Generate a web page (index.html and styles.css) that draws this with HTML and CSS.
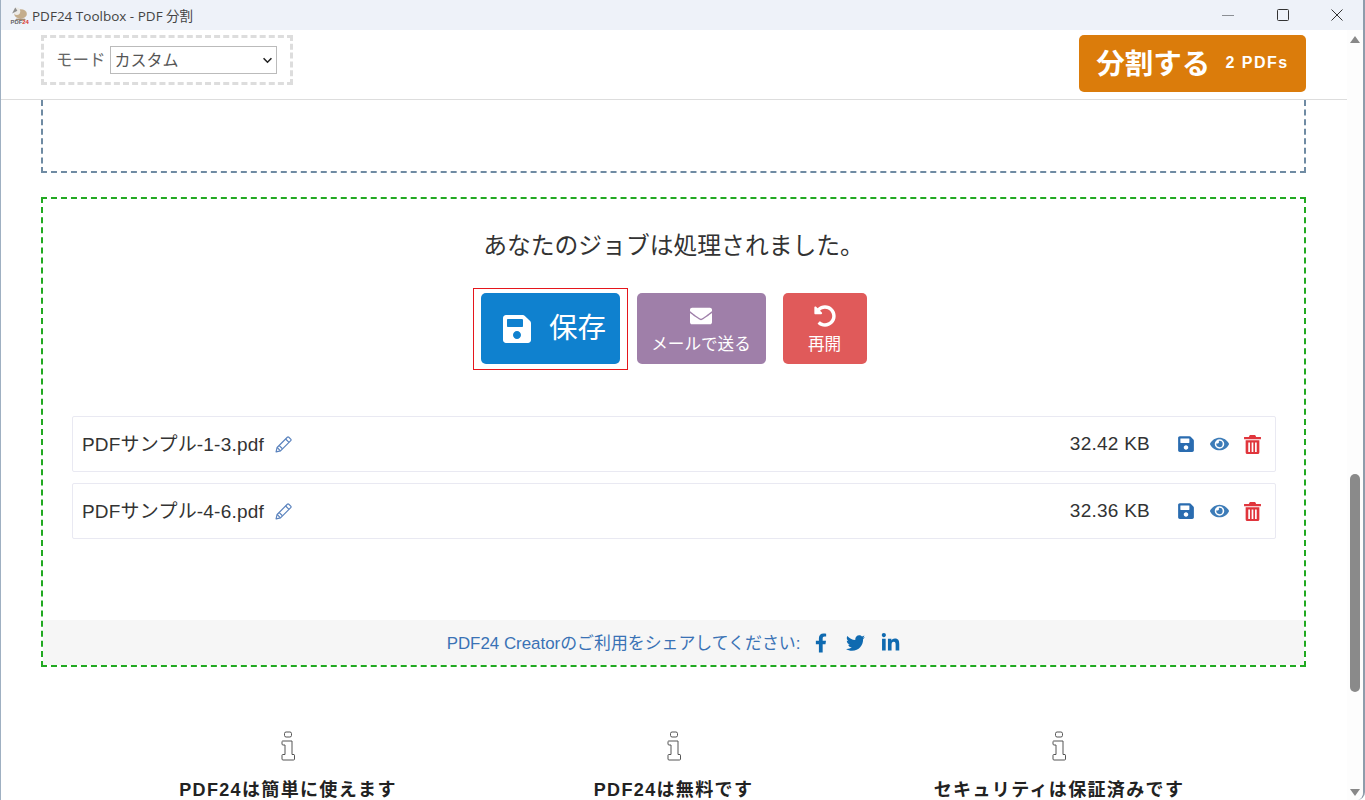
FILE: index.html
```html
<!DOCTYPE html>
<html lang="ja">
<head>
  <meta charset="UTF-8" />
  <title>PDF24 Toolbox - PDF 分割</title>
  <link rel="stylesheet" href="styles.css">
</head>
<body>

<div class="window">
  <div class="titlebar">
    <svg class="app-logo" viewBox="0 0 18 18" aria-hidden="true">
      <ellipse cx="10" cy="7.5" rx="6" ry="4.5" fill="#c4ad8c"/>
      <ellipse cx="6.5" cy="5" rx="3.2" ry="3.6" fill="#eceae6"/>
      <path d="M2 7l3-5.5 2 3z" fill="#8d8d8d"/>
      <path d="M6 12h8l1 1H5z" fill="#8a6a45"/>
      <text x="0.5" y="17.5" class="logo-text">PDF<tspan fill="#d8342c">24</tspan></text>
    </svg>
    <span class="app-title">PDF24 Toolbox - PDF 分割</span>
    <div class="win-buttons">
      <svg viewBox="0 0 12 12"><path d="M0 6.5h12" stroke="#8b8f94" stroke-width="1"/></svg>
      <svg viewBox="0 0 12 12"><rect x=".5" y=".5" width="11" height="11" rx="1" fill="none" stroke="#333" stroke-width="1"/></svg>
      <svg viewBox="0 0 12 12"><path d="M.5.5l11 11M11.5.5l-11 11" stroke="#333" stroke-width="1"/></svg>
    </div>
  </div>

  <div class="frame">
    <div class="content">
      <div class="toolbar">
        <div class="mode-box">
          <label class="mode-label">モード</label>
          <div class="select-wrap">
            <select class="mode-select"><option>カスタム</option></select>
            <svg class="select-arrow" viewBox="0 0 12 8"><path d="M1.5 1.5L6 6l4.5-4.5" fill="none" stroke="#222" stroke-width="1.8"/></svg>
          </div>
        </div>
        <button class="split-btn">分割する <small>2 PDFs</small></button>
      </div>

      <div class="page">
        <div class="pages-box"></div>

        <div class="result-box">
          <h2 class="result-title">あなたのジョブは処理されました。</h2>

          <div class="actions">
            <div class="save-wrap">
              <button class="btn-save">
                <svg viewBox="0 0 448 512"><use href="#i-save"/></svg>
                <span>保存</span>
              </button>
            </div>
            <button class="btn-small btn-mail">
              <svg viewBox="0 0 512 512"><path d="M502.3 190.8c3.9-3.1 9.7-.2 9.7 4.7V400c0 26.5-21.5 48-48 48H48c-26.5 0-48-21.5-48-48V195.6c0-5 5.7-7.8 9.7-4.7 22.4 17.4 52.1 39.5 154.1 113.6 21.1 15.4 56.7 47.8 92.2 47.6 35.7.3 72-32.8 92.3-47.6 102-74.1 131.6-96.3 154-113.7zM256 320c23.2.4 56.6-29.2 73.4-41.4 132.7-96.3 142.8-104.7 173.4-128.7 5.8-4.5 9.2-11.5 9.2-18.9v-19c0-26.5-21.5-48-48-48H48C21.5 64 0 85.5 0 112v19c0 7.4 3.4 14.3 9.2 18.9 30.6 23.9 40.7 32.4 173.4 128.7 16.8 12.2 50.2 41.8 73.4 41.4z"/></svg>
              <span>メールで送る</span>
            </button>
            <button class="btn-small btn-redo">
              <svg viewBox="0 0 512 512"><path d="M255.545 8c-66.269.119-126.438 26.233-170.86 68.685L48.971 40.971C33.851 25.851 8 36.559 8 57.941V192c0 13.255 10.745 24 24 24h134.059c21.382 0 32.09-25.851 16.971-40.971l-41.75-41.75c30.864-28.899 70.801-44.907 113.23-45.273 92.398-.798 170.283 73.977 169.484 169.442C423.236 348.009 349.816 424 256 424c-41.127 0-79.997-14.678-110.63-41.556-4.743-4.161-11.906-3.908-16.368.553L89.34 422.659c-4.872 4.872-4.631 12.815.482 17.433C133.798 479.813 192.074 504 256 504c136.966 0 247.999-111.033 248-247.998C504.001 119.193 392.354 7.755 255.545 8z"/></svg>
              <span>再開</span>
            </button>
          </div>

          <div class="files">
            <div class="file-row">
              <span class="file-name">PDFサンプル-1-3.pdf</span>
              <svg class="icon-pencil" viewBox="0 0 16 16"><use href="#i-pencil"/></svg>
              <span class="file-size">32.42 KB</span>
              <svg class="icon-save" viewBox="0 0 448 512"><use href="#i-save"/></svg>
              <svg class="icon-eye" viewBox="0 0 576 512"><use href="#i-eye"/></svg>
              <svg class="icon-trash" viewBox="0 0 16 18"><use href="#i-trash"/></svg>
            </div>
            <div class="file-row">
              <span class="file-name">PDFサンプル-4-6.pdf</span>
              <svg class="icon-pencil" viewBox="0 0 16 16"><use href="#i-pencil"/></svg>
              <span class="file-size">32.36 KB</span>
              <svg class="icon-save" viewBox="0 0 448 512"><use href="#i-save"/></svg>
              <svg class="icon-eye" viewBox="0 0 576 512"><use href="#i-eye"/></svg>
              <svg class="icon-trash" viewBox="0 0 16 18"><use href="#i-trash"/></svg>
            </div>
          </div>

          <div class="share">
            <span>PDF24 Creatorのご利用をシェアしてください:</span>
            <svg class="share-fb" viewBox="0 0 320 512"><path d="M279.14 288l14.22-92.66h-88.91v-60.13c0-25.35 12.42-50.06 52.24-50.06h40.42V6.26S260.43 0 225.36 0c-73.22 0-121.08 44.38-121.08 124.72v70.62H22.89V288h81.39v224h100.17V288z"/></svg>
            <svg class="share-tw" viewBox="0 0 512 512"><path d="M459.37 151.716c.325 4.548.325 9.097.325 13.645 0 138.72-105.583 298.558-298.558 298.558-59.452 0-114.68-17.219-161.137-47.106 8.447.974 16.568 1.299 25.34 1.299 49.055 0 94.213-16.568 130.274-44.832-46.132-.975-84.792-31.188-98.112-72.772 6.498.974 12.995 1.624 19.818 1.624 9.421 0 18.843-1.3 27.614-3.573-48.081-9.747-84.143-51.98-84.143-102.985v-1.299c13.969 7.797 30.214 12.67 47.431 13.319-28.264-18.843-46.781-51.005-46.781-87.391 0-19.492 5.197-37.36 14.294-52.954 51.655 63.675 129.3 105.258 216.365 109.807-1.624-7.797-2.599-15.918-2.599-24.04 0-57.828 46.782-104.934 104.934-104.934 30.213 0 57.502 12.67 76.67 33.137 23.715-4.548 46.456-13.32 66.599-25.34-7.798 24.366-24.366 44.833-46.132 57.827 21.117-2.273 41.584-8.122 60.426-16.243-14.292 20.791-32.161 39.308-52.628 54.253z"/></svg>
            <svg class="share-in" viewBox="0 0 448 512"><path d="M100.28 448H7.4V148.9h92.88zM53.79 108.1C24.09 108.1 0 83.5 0 53.8a53.79 53.79 0 0 1 107.58 0c0 29.7-24.1 54.3-53.79 54.3zM447.9 448h-92.68V302.4c0-34.7-.7-79.2-48.29-79.2-48.29 0-55.69 37.7-55.69 76.7V448h-92.78V148.9h89.08v40.8h1.3c12.4-23.5 42.69-48.3 87.88-48.3 94 0 111.28 61.9 111.28 142.3V448z"/></svg>
          </div>
        </div>

        <div class="features">
          <div class="feature">
            <svg viewBox="0 0 14 30"><use href="#i-info"/></svg>
            <h3>PDF24は簡単に使えます</h3>
          </div>
          <div class="feature">
            <svg viewBox="0 0 14 30"><use href="#i-info"/></svg>
            <h3>PDF24は無料です</h3>
          </div>
          <div class="feature">
            <svg viewBox="0 0 14 30"><use href="#i-info"/></svg>
            <h3>セキュリティは保証済みです</h3>
          </div>
        </div>
      </div>
    </div>

    <div class="scrollbar">
      <span class="arrow-up"></span>
      <div class="track"><div class="thumb"></div></div>
      <span class="arrow-down"></span>
    </div>
  </div>
</div>

<svg class="defs" aria-hidden="true">
  <defs>
    <path id="i-save" d="M433.941 129.941l-83.882-83.882A48 48 0 0 0 316.118 32H48C21.49 32 0 53.49 0 80v352c0 26.51 21.49 48 48 48h352c26.51 0 48-21.49 48-48V163.882a48 48 0 0 0-14.059-33.941zM224 416c-35.346 0-64-28.654-64-64 0-35.346 28.654-64 64-64s64 28.654 64 64c0 35.346-28.654 64-64 64zm96-304.52V212c0 6.627-5.373 12-12 12H76c-6.627 0-12-5.373-12-12V108c0-6.627 5.373-12 12-12h228.52c3.183 0 6.235 1.264 8.485 3.515l3.48 3.48A11.996 11.996 0 0 1 320 111.48z"/>
    <path id="i-eye" d="M572.52 241.4C518.29 135.59 410.93 64 288 64S57.68 135.64 3.48 241.41a32.35 32.35 0 0 0 0 29.19C57.71 376.41 165.07 448 288 448s230.32-71.64 284.52-177.41a32.35 32.35 0 0 0 0-29.19zM288 400a144 144 0 1 1 144-144 143.93 143.93 0 0 1-144 144zm0-240a95.31 95.31 0 0 0-25.31 3.79 47.85 47.85 0 0 1-66.9 66.9A95.78 95.78 0 1 0 288 160z"/>
    <path id="i-trash" fill-rule="evenodd" d="M5.5 0h5l1 2H16v2H0V2h4.5zM1.5 5h13v11.5a1.5 1.5 0 0 1-1.5 1.5H3a1.5 1.5 0 0 1-1.5-1.5zM4 7v9h1.6V7zM7.2 7v9h1.6V7zM10.4 7v9H12V7z"/>
    <g id="i-pencil" fill="none" stroke="currentColor" stroke-width="1.1" stroke-linejoin="round">
      <path d="M1 15l1-4.2L11.6 1.2a1 1 0 0 1 1.4 0l1.8 1.8a1 1 0 0 1 0 1.4L5.2 14z"/>
      <path d="M10 2.8l3.2 3.2M4 9l3 3M2 10.8l3.2 3.2"/>
    </g>
    <g id="i-info" fill="none" stroke="currentColor" stroke-width="1">
      <rect x="3.5" y="1" width="7" height="5" rx="1.6"/>
      <path d="M1.5 10h9.5v13.5h2a.8.8 0 0 1 .5.7V28a1 1 0 0 1-1 1H2a1 1 0 0 1-1-1v-3.8a.8.8 0 0 1 .7-.7H4V14H2a1 1 0 0 1-1-1v-2.2a.8.8 0 0 1 .5-.8z"/>
    </g>
  </defs>
</svg>

</body>
</html>
```

FILE: styles.css
```css
* { margin: 0; padding: 0; box-sizing: border-box; }
html, body { height: 100%; overflow: hidden; background: #fff; }
body { font-family: "Liberation Sans", "Noto Sans CJK JP", sans-serif; color: #222; }

.window {
  display: flex; flex-direction: column; height: 800px;
  border-left: 1px solid #9fb0c2; border-right: 2px solid #8e9cab;
  border-bottom-right-radius: 8px; overflow: hidden;
}
.defs { width: 0; height: 0; display: block; }

/* title bar */
.titlebar {
  display: flex; align-items: center; height: 30px; flex: none;
  background: #eef2f9; padding-left: 9px;
}
.app-logo { width: 19px; height: 19px; margin-right: 3px; }
.logo-text { font: bold 5.6px "Liberation Sans", sans-serif; fill: #666; }
.app-title { font: 13.5px "Open Sans", "Noto Sans CJK JP", sans-serif; color: #444; }
.win-buttons { margin-left: auto; display: flex; gap: 42.5px; margin-right: 20px; }
.win-buttons svg { width: 12px; height: 12px; display: block; }

.frame { flex: 1; display: flex; min-height: 0; }
.content { flex: 1; min-width: 0; display: flex; flex-direction: column; }

/* top toolbar */
.toolbar {
  display: flex; justify-content: space-between; align-items: flex-start; flex: none;
  height: 70px; padding: 5px 41px 0 40px; border-bottom: 1px solid #ddd;
}
.mode-box {
  display: flex; align-items: center; gap: 4px; width: 252px; height: 50px;
  border: 3px dashed #ddd; padding-left: 12px;
}
.mode-label { font-size: 16.5px; color: #666; margin-bottom: 3px; }
.select-wrap { position: relative; }
.mode-select {
  display: block; appearance: none;
  width: 167px; height: 28px; font-size: 16px; color: #555; background: #fff;
  font-family: "Liberation Sans", "Noto Sans CJK JP", sans-serif;
  border: 1px solid #bbb; padding-left: 4px;
}
.select-arrow { position: absolute; right: 4px; top: 11px; width: 11px; height: 7px; pointer-events: none; }
.split-btn {
  display: flex; align-items: center; justify-content: center; gap: 15px;
  width: 227px; height: 57px; border: none; border-radius: 5px; padding-bottom: 5px;
  background: #db7c0b; color: #fff; font: bold 28.5px "Liberation Sans", "Noto Sans CJK JP", sans-serif;
}
.split-btn small { font-size: 16px; letter-spacing: 1.5px; padding-top: 3px; }

.page { flex: 1; min-height: 0; padding: 0 41px 0 40px; }
.pages-box {
  height: 73px; border: 2px dashed #6f8ba3; border-top: none;
}

/* result */
.result-box {
  display: flex; flex-direction: column; height: 470px; margin-top: 24px;
  border: 2px dashed #21a921;
}
.result-title {
  font-size: 23.8px; font-weight: 400; text-align: center; color: #333;
  margin-top: 31px; line-height: 32px;
}
.actions { display: flex; justify-content: center; align-items: flex-start; gap: 17px; margin-top: 31px; height: 71px; }
.save-wrap { margin: -5px -8px 0; padding: 4px 7px 5px; border: 1px solid #e5161c; }
.btn-save {
  display: flex; align-items: center; justify-content: center; gap: 18px;
  width: 139px; height: 71px; border: none; border-radius: 5px; padding-left: 9px;
  background: #0f81cf; color: #fff; font: 28.5px "Liberation Sans", "Noto Sans CJK JP", sans-serif;
}
.btn-save span { margin-bottom: 6px; }
.btn-save svg { width: 28px; height: 32px; fill: #fff; }
.btn-small {
  display: flex; flex-direction: column; align-items: center; justify-content: center;
  height: 71px; border: none; border-radius: 5px; color: #fff; padding-top: 2px;
  font: 16.6px "Liberation Sans", "Noto Sans CJK JP", sans-serif;
}
.btn-small svg { fill: #fff; width: 22px; height: 22px; margin-bottom: 4px; }
.btn-mail { width: 129px; background: #9f7fa9; }
.btn-redo { width: 84px; background: #e05a5a; }

.files { display: flex; flex-direction: column; gap: 11px; margin: 52px 28px 0 29px; }
.file-row {
  display: flex; align-items: center; height: 56px; padding: 0 14px 0 9px;
  border: 1px solid #e9e9f2; border-radius: 2px;
}
.file-name { font-size: 19px; letter-spacing: 0.2px; color: #333; margin-bottom: 4px; }
.icon-pencil { width: 17px; height: 17px; margin-left: 11px; color: #5a82bd; }
.file-size { margin-left: auto; font-size: 19px; letter-spacing: 0.25px; color: #333; margin-right: 28px; }
.icon-save { width: 16px; height: 18px; fill: #2a6cb0; margin-right: 16px; }
.icon-eye { width: 19px; height: 18px; fill: #3d7cb8; margin-right: 15px; }
.icon-trash { width: 17px; height: 19px; fill: #e0353c; }

.share {
  display: flex; align-items: center; justify-content: center; height: 45px;
  margin-top: auto; background: #f6f6f6; color: #3a72b5; font-size: 16.9px;
}
.share span { margin-bottom: 3px; }
.share svg { fill: #0f6ab0; height: 20px; }
.share-fb { width: 12px; margin-left: 15px; }
.share-tw { width: 19px; margin-left: 19px; }
.share-in { width: 19px; margin-left: 16px; }

/* info columns */
.features {
  display: grid; grid-template-columns: repeat(3, 385.5px); justify-content: center;
  margin-top: 64px;
}
.feature { text-align: center; color: #555; }
.feature svg { width: 14px; height: 30px; display: block; margin: 0 auto 14px; }
.feature h3 { font-size: 18px; color: #222; letter-spacing: 1.35px; }

/* scrollbar */
.scrollbar {
  width: 16px; flex: none; display: flex; flex-direction: column; align-items: center;
  background: #fdfdfd;
}
.track { flex: 1; width: 100%; padding: 431px 3px 0; }
.thumb { height: 218px; background: #8a8a8a; border-radius: 5px; }
.arrow-up, .arrow-down { width: 0; height: 0; border-left: 5px solid transparent; border-right: 5px solid transparent; }
.arrow-up { border-bottom: 7px solid #888; margin-top: 6px; }
.arrow-down { border-top: 7px solid #888; margin-bottom: 4px; }
```
